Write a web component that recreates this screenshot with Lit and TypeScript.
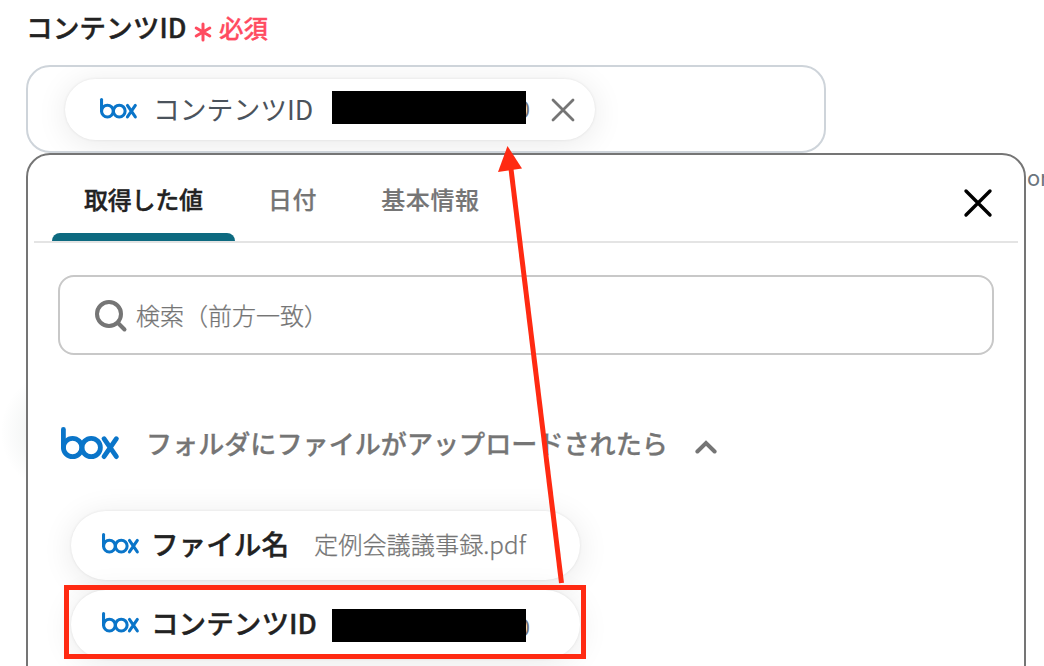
import { LitElement, css, html } from 'lit'
import { customElement, property, state } from 'lit/decorators.js'
import { classMap } from 'lit/directives/class-map.js'

/**
 * The box logo, drawn with rounded strokes. Its width comes from the parent.
 */
@customElement('box-logo')
export class BoxLogo extends LitElement {
  render() {
    return html`
      <svg viewBox="0 0 58 32" fill="none" stroke="#0a75c9" stroke-width="4.8" stroke-linecap="round" stroke-linejoin="round">
        <path d="M2.4 2.4V20.5" />
        <circle cx="11.6" cy="20.5" r="9.2" />
        <circle cx="30.2" cy="20.5" r="9.2" />
        <path d="M43 11.7L55.4 29.6M55.4 11.7L43 29.6" />
      </svg>
    `
  }

  static styles = css`
    :host {
      display: block;
      flex: none;
    }
    svg {
      display: block;
      width: 100%;
      overflow: visible;
    }
  `
}

/**
 * Pill with the service logo, a label and a value.
 *
 * @slot - Extra controls at the end of the pill.
 */
@customElement('value-chip')
export class ValueChip extends LitElement {
  @property({type: String})
  label = ''

  /** Leave empty to show the masked value. */
  @property({type: String})
  value = ''

  @property({type: Boolean})
  selected = false

  render() {
    return html`
      <div class=${classMap({chip: true, selected: this.selected})}>
        <box-logo class="logo"></box-logo>
        <span class="label">${this.label}</span>
        ${this.value
          ? html`<span class="value">${this.value}</span>`
          : html`<span class="masked">0</span>`}
        <slot></slot>
      </div>
    `
  }

  static styles = css`
    :host {
      display: block;
    }
    .chip {
      box-sizing: border-box;
      display: flex;
      align-items: center;
      width: 509px;
      height: 69px;
      padding-left: 31px;
      border-radius: 35px;
      background: #fff;
      box-shadow: 0 0 3px rgba(0, 0, 0, 0.09), 0 4px 32px rgba(0, 0, 0, 0.09);
      white-space: nowrap;
    }
    .logo {
      width: 37px;
      margin: 0 12px 5px 0;
    }
    .label {
      width: 181px;
      flex: none;
      margin-bottom: 5px;
      color: #222;
      font-size: 27.6px;
      font-weight: 500;
      -webkit-text-stroke: 0.4px #222;
    }
    .value {
      margin: 0 0 5px -18px;
      color: #757575;
      font-size: 24.2px;
      font-weight: 300;
      -webkit-text-stroke: 0.25px #757575;
    }
    .masked {
      position: relative;
      width: 198px;
      margin-top: 2px;
      line-height: 33px;
      color: #757575;
      font-size: 24px;
      text-align: right;
    }
    .masked::before {
      content: '';
      position: absolute;
      inset: 0 4px 0 0;
      background: #000;
    }
    .selected {
      width: 530px;
      height: 61px;
      padding-left: 35px;
    }
    .selected .logo {
      margin: 0 16px 2px 0;
    }
    .selected .label {
      width: 179px;
      margin-bottom: 2px;
      color: #4b535c;
      font-size: 26.8px;
      font-weight: 400;
      -webkit-text-stroke: 0;
    }
    .selected .masked {
      margin: 0 0 4px;
    }
  `
}

@customElement('app-root')
export class AppRoot extends LitElement {
  tabs = ['取得した値', '日付', '基本情報']

  @state()
  activeTab = 0

  @state()
  isGroupOpen = true

  _toggleGroup = () : void => {
    this.isGroupOpen = !this.isGroupOpen
  }

  render() {
    return html`
      <div class="page">
        <div class="glow"></div>
        <div class="field-title">
          <span class="name">コンテンツID</span>
          <svg class="asterisk" width="18" height="20" viewBox="0 0 18 20" fill="none" stroke="#ff4b5f" stroke-width="3" stroke-linecap="round">
            <path d="M9 2V18M2.2 6L15.8 14M15.8 6L2.2 14" />
          </svg>
          <span class="required">必須</span>
        </div>
        <div class="field">
          <value-chip label="コンテンツID" selected>
            <svg class="remove" width="24" height="24" viewBox="0 0 24 24" fill="none" stroke="#757575" stroke-width="2.8" stroke-linecap="round">
              <path d="M2 2L22 22M22 2L2 22" />
            </svg>
          </value-chip>
        </div>
        <div class="lower">
          <div class="panel">
            <div class="tabs">
              ${this.tabs.map((tab, i) => html`
                <div class=${classMap({tab: true, active: i === this.activeTab})} @click=${() => { this.activeTab = i }}>${tab}</div>
              `)}
              <svg class="close" width="30" height="30" viewBox="0 0 30 30" fill="none" stroke="#000" stroke-width="3.4" stroke-linecap="round">
                <path d="M3 3L27 27M27 3L3 27" />
              </svg>
            </div>
            <div class="search">
              <svg width="34" height="34" viewBox="0 0 34 34" fill="none" stroke="#757575" stroke-width="4" stroke-linecap="round">
                <circle cx="15" cy="15" r="12" />
                <path d="M24 24L30.5 30.5" />
              </svg>
              <span>検索（前方一致）</span>
            </div>
            <div class="group" @click=${this._toggleGroup}>
              <box-logo class="group-logo"></box-logo>
              <span>フォルダにファイルがアップロードされたら</span>
              <svg width="22" height="14" viewBox="0 0 22 14" fill="none" stroke="#757575" stroke-width="4" stroke-linecap="round" stroke-linejoin="miter">
                <path d="M2.4 11.5L11 3L19.6 11.5" />
              </svg>
            </div>
            ${this.isGroupOpen ? html`
              <div class="values">
                <value-chip label="ファイル名" value="定例会議議事録.pdf"></value-chip>
                <value-chip label="コンテンツID"></value-chip>
              </div>
            ` : ''}
          </div>
          <span class="behind">or</span>
        </div>
        <svg class="marks" width="1044" height="666" viewBox="0 0 1044 666">
          <rect x="66.5" y="587.5" width="517" height="69" fill="none" stroke="#ff2a12" stroke-width="5" />
          <path d="M561.5 583L511 169" stroke="#ff2a12" stroke-width="5" />
          <path d="M507.5 146L522 168.5L498 172Z" fill="#ff2a12" />
        </svg>
      </div>
    `
  }

  static styles = css`
    :host {
      display: block;
      font-family: 'Noto Sans CJK JP', sans-serif;
    }
    .page {
      position: relative;
      box-sizing: border-box;
      width: 1044px;
      height: 666px;
      padding-left: 26px;
      overflow: hidden;
      background: #fff;
    }
    /* shadow of the card hidden behind the panel */
    .glow {
      position: absolute;
      left: 0;
      top: 370px;
      width: 60px;
      height: 124px;
      background: radial-gradient(ellipse at right, rgba(60, 90, 80, 0.12), transparent 70%);
    }
    .field-title {
      display: flex;
      align-items: center;
      height: 65px;
      box-sizing: border-box;
      padding-bottom: 9px;
      line-height: 40px;
    }
    .name {
      width: 168px;
      margin-bottom: 2px;
      color: #222;
      font-size: 26.7px;
      font-weight: 500;
      -webkit-text-stroke: 0.4px #222;
    }
    .asterisk {
      margin-top: 8px;
    }
    .required {
      margin-left: 7px;
      color: #ff4b5f;
      font-size: 24.5px;
      font-weight: 500;
      -webkit-text-stroke: 0.3px #ff4b5f;
    }
    .field {
      box-sizing: border-box;
      width: 800px;
      height: 88px;
      padding: 12px 0 0 37px;
      border: 2px solid #ced4da;
      border-radius: 24px;
      overflow: hidden;
    }
    .remove {
      margin-left: 21px;
    }
    .lower {
      display: flex;
    }
    .panel {
      position: relative;
      box-sizing: border-box;
      flex: none;
      width: 1000px;
      height: 540px;
      padding: 0 6px;
      border: 2px solid #757575;
      border-radius: 24px;
      background: #fff;
    }
    .tabs {
      display: flex;
      box-sizing: border-box;
      height: 88px;
      padding-left: 18px;
      border-bottom: 2px solid #e4e4e4;
    }
    .tab {
      position: relative;
      box-sizing: border-box;
      height: 86px;
      padding: 0 32px;
      line-height: 88px;
      color: #757575;
      font-size: 24px;
      font-weight: 500;
      letter-spacing: 0.6px;
      -webkit-text-stroke: 0.2px #757575;
    }
    .active {
      width: 183px;
      margin-right: 1px;
      color: #222;
      letter-spacing: -0.25px;
      white-space: nowrap;
      -webkit-text-stroke: 0.4px #222;
    }
    .active::after {
      content: '';
      position: absolute;
      left: 0;
      right: 0;
      bottom: 0;
      height: 8px;
      border-radius: 8px 8px 0 0;
      background: #0d6a80;
    }
    .close {
      margin: 33px 25px 0 auto;
    }
    .search {
      display: flex;
      align-items: center;
      box-sizing: border-box;
      width: 936px;
      height: 80px;
      margin: 32px 0 0 24px;
      padding-left: 34px;
      border: 2px solid #c8c8c8;
      border-radius: 16px;
      color: #757575;
      font-size: 24px;
      font-weight: 300;
      -webkit-text-stroke: 0.25px #757575;
    }
    .search span {
      margin: 0 0 2px 8px;
    }
    .search svg {
      margin-top: 1px;
    }
    .group {
      display: flex;
      align-items: center;
      height: 60px;
      margin: 60px 0 0 27px;
      color: #757575;
      font-size: 26.1px;
      font-weight: 500;
      -webkit-text-stroke: 0.3px #757575;
    }
    .group span {
      margin-bottom: 4px;
    }
    .group-logo {
      width: 58px;
      margin: 0 27px 5px 0;
    }
    .group svg {
      margin: 3px 0 0 27px;
    }
    .values {
      display: flex;
      flex-direction: column;
      gap: 10px;
      margin: 36px 0 0 37px;
    }
    .behind {
      margin: 10px 0 0 1px;
      color: #6c757d;
      font-family: Inter, sans-serif;
      font-size: 22px;
      line-height: 30px;
    }
    .marks {
      position: absolute;
      left: 0;
      top: 0;
      pointer-events: none;
    }
  `
}

declare global {
  interface HTMLElementTagNameMap {
    'box-logo': BoxLogo,
    'value-chip': ValueChip,
    'app-root': AppRoot
  }
}
